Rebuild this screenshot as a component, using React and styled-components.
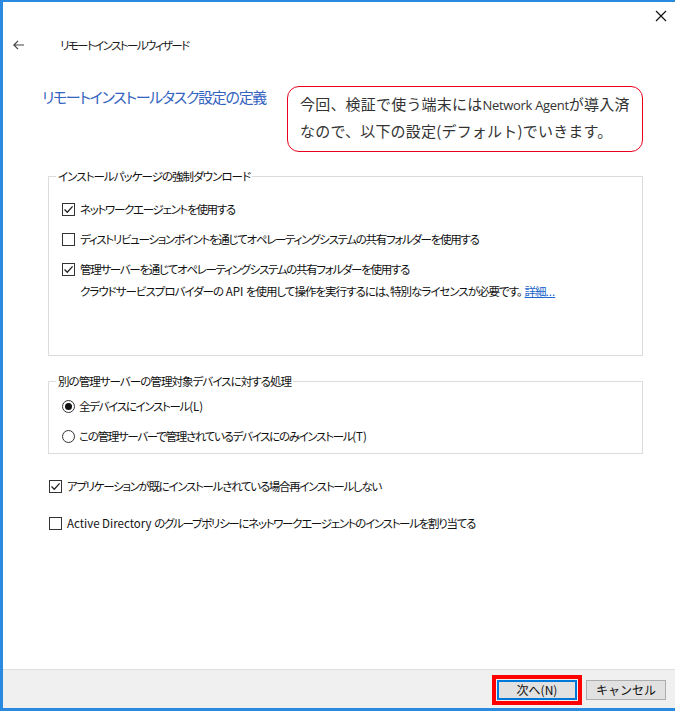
import React from "react"
import styled, {createGlobalStyle} from "styled-components"

const GlobalStyle = createGlobalStyle`
  html, body {
    margin: 0;
    padding: 0;
    background: #fff;
  }
  body {
    font-family: "Noto Sans CJK JP", "Noto Sans", sans-serif;
    font-feature-settings: "palt";
    color: #000;
  }
`

const App = () => {
  return (
    <>
      <GlobalStyle/>
      <Window>
        <TitleBar>
          <CloseIcon viewBox="0 0 12 12">
            <path d="M1 1 L11 11 M11 1 L1 11" stroke="#111" strokeWidth="1.2" fill="none"/>
          </CloseIcon>
        </TitleBar>
        <Header>
          <BackIcon viewBox="0 0 14 12">
            <path d="M13 6 H2 M6.5 1.5 L2 6 L6.5 10.5" stroke="#444" strokeWidth="1.3" fill="none"/>
          </BackIcon>
          <WizardTitle>リモートインストールウィザード</WizardTitle>
        </Header>

        <Content>
          <Heading>リモートインストールタスク設定の定義</Heading>

          <Group>
            <Legend>インストールパッケージの強制ダウンロード</Legend>
            <GroupBody $top={16} $bottom={55} $gap={12}>
              <Option><CheckBox checked/>ネットワークエージェントを使用する</Option>
              <Option><CheckBox/>ディストリビューションポイントを通じてオペレーティングシステムの共有フォルダーを使用する</Option>
              <div>
                <Option><CheckBox checked/>管理サーバーを通じてオペレーティングシステムの共有フォルダーを使用する</Option>
                <Note>
                  クラウドサービスプロバイダーの<Lat> API </Lat>を使用して操作を実行するには、特別なライセンスが必要です。<Link>詳細<Lat>...</Lat></Link>
                </Note>
              </div>
            </GroupBody>
          </Group>

          <Group $spaced>
            <Legend>別の管理サーバーの管理対象デバイスに対する処理</Legend>
            <GroupBody $top={8} $bottom={8} $gap={12}>
              <Option><Radio checked/>全デバイスにインストール<Lat>(L)</Lat></Option>
              <Option><Radio/>この管理サーバーで管理されているデバイスにのみインストール<Lat>(T)</Lat></Option>
            </GroupBody>
          </Group>

          <StandaloneList>
            <Option><CheckBox checked/>アプリケーションが既にインストールされている場合再インストールしない</Option>
            <Option>
              <CheckBox/><Lat>Active Directory&nbsp;</Lat>のグループポリシーにネットワークエージェントのインストールを割り当てる
            </Option>
          </StandaloneList>
        </Content>

        <Footer>
          <Button $primary $marked>次へ(N)</Button>
          <Button>キャンセル</Button>
        </Footer>

        <Callout>
          今回、検証で使う端末には<Latin>Network Agent</Latin>が導入済<br/>
          なので、以下の設定(デフォルト)でいきます。
        </Callout>
      </Window>
    </>
  )
}

const CheckBox = ({checked}) => (
  <Box>
    {checked && (
      <svg width="11" height="11" viewBox="0 0 11 11">
        <path d="M1.5 5.5 L4.3 8.3 L9.6 2.4" stroke="#222" strokeWidth="1.3" fill="none"/>
      </svg>
    )}
  </Box>
)

const Radio = ({checked}) => (
  <Circle>{checked && <Dot/>}</Circle>
)

const Window = styled.div`
  position: relative;
  box-sizing: border-box;
  width: 675px;
  height: 711px;
  border-top: 2px solid #2a8ae0;
  border-left: 3px solid #2a8ae0;
  border-bottom: 3px solid #2a8ae0;
  display: flex;
  flex-direction: column;
  background: #fff;
`

const TitleBar = styled.div`
  height: 28px;
  display: flex;
  justify-content: flex-end;
  align-items: center;
  padding-right: 8px;
`

const CloseIcon = styled.svg`
  width: 12px;
  height: 12px;
`

const Header = styled.div`
  height: 30px;
  display: flex;
  align-items: center;
  padding-left: 9px;
`

const BackIcon = styled.svg`
  width: 13px;
  height: 12px;
`

const WizardTitle = styled.div`
  margin-left: 35px;
  font-size: 11.5px;
  letter-spacing: -1.6px;
  line-height: 16px;
  color: #1a1a1a;
`

const Content = styled.div`
  flex: 1;
  padding: 0 32px 0 45px;
`

const Heading = styled.h1`
  margin: 25px 0 0 -6px;
  font-size: 15px;
  letter-spacing: -1.3px;
  line-height: 24px;
  font-weight: 400;
  color: #3563c0;
`

const Group = styled.fieldset`
  margin: ${p => (p.$spaced ? "17px" : "59px")} 0 0 0;
  padding: 0 0 0 13px;
  border: 1px solid #dcdcdc;
  min-width: 0;
`

const Legend = styled.legend`
  margin-left: -6px;
  padding: 0 2px;
  font-size: 11.5px;
  letter-spacing: -0.95px;
  line-height: 16px;
  color: #111;
`

const GroupBody = styled.div`
  display: flex;
  flex-direction: column;
  gap: ${p => p.$gap}px;
  padding: ${p => p.$top}px 0 ${p => p.$bottom}px 0;
`

const Option = styled.div`
  display: flex;
  align-items: center;
  font-size: 11.5px;
  letter-spacing: -1.3px;
  line-height: 18px;
  color: #111;
  white-space: pre;
`

const Lat = styled.span`
  letter-spacing: 0;
  white-space: pre;
`

const Box = styled.span`
  box-sizing: border-box;
  width: 13px;
  height: 13px;
  border: 1px solid #333;
  background: #fff;
  margin-right: 5px;
  display: inline-flex;
  align-items: center;
  justify-content: center;
  flex-shrink: 0;
`

const Circle = styled.span`
  box-sizing: border-box;
  width: 13px;
  height: 13px;
  border: 1px solid #333;
  border-radius: 50%;
  background: #fff;
  margin-right: 4px;
  display: inline-flex;
  align-items: center;
  justify-content: center;
  flex-shrink: 0;
`

const Dot = styled.span`
  width: 7px;
  height: 7px;
  border-radius: 50%;
  background: #111;
`

const Note = styled.div`
  margin: 4px 0 0 18px;
  font-size: 11.5px;
  letter-spacing: -1px;
  line-height: 18px;
  color: #111;
  white-space: nowrap;
`

const Link = styled.span`
  margin-left: 3px;
  color: #1a66cc;
  text-decoration: underline;
`

const StandaloneList = styled.div`
  display: flex;
  flex-direction: column;
  gap: 19px;
  margin: 23px 0 0 1px;
`

const Footer = styled.div`
  height: 39px;
  box-sizing: border-box;
  border-top: 1px solid #dfdfdf;
  background: #f0f0f0;
  display: flex;
  justify-content: flex-end;
  align-items: flex-start;
  gap: 9px;
  padding: 10px 9px 0 0;
`

const Button = styled.button`
  box-sizing: border-box;
  width: 80px;
  height: 20px;
  padding: 0;
  font-family: inherit;
  font-size: 12px;
  line-height: 16px;
  color: #111;
  background: #e1e1e1;
  border: ${p => (p.$primary ? "2px solid #0078d7" : "1px solid #adadad")};
  outline: ${p => (p.$marked ? "4px solid #ff0000" : "none")};
  outline-offset: 1px;
`

const Callout = styled.div`
  position: absolute;
  left: 284px;
  top: 84px;
  width: 356px;
  height: 66px;
  box-sizing: border-box;
  border: 1.5px solid #e8001c;
  border-radius: 12px;
  background: #fff;
  padding: 4px 0 0 12px;
  font-size: 15px;
  letter-spacing: 0.2px;
  line-height: 26px;
  color: #333;
  font-feature-settings: normal;
  white-space: nowrap;
`

const Latin = styled.span`
  font-family: "Open Sans", "Noto Sans", sans-serif;
  font-size: 13px;
  letter-spacing: -0.3px;
`

export default App
